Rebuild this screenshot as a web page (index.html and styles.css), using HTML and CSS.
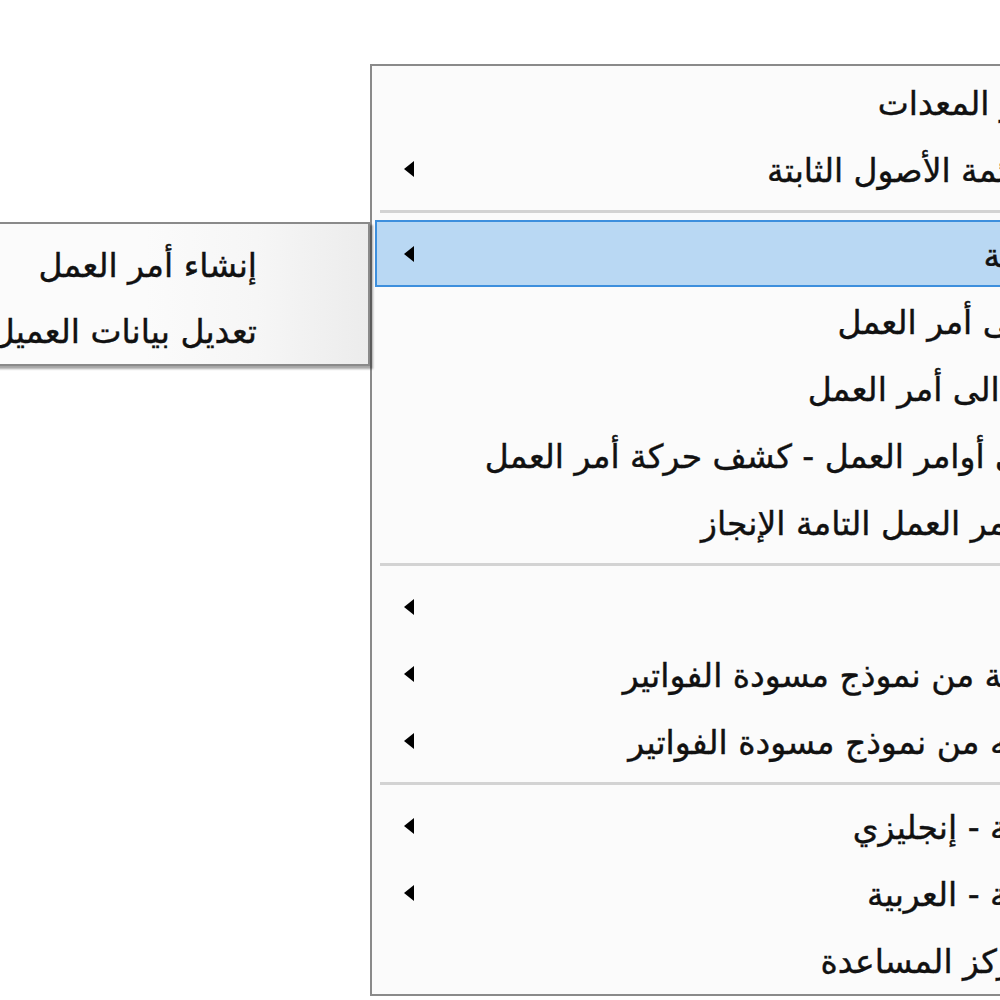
FILE: index.html
```html
<!DOCTYPE html>
<html lang="ar" dir="rtl">
<head>
    <meta charset="UTF-8">
    <title>قائمة أوامر العمل</title>
    <link rel="stylesheet" href="styles.css">
</head>
<body>
    <div class="desk">
        <div class="menu menu-main">
            <div class="item"><span class="icon"></span><span class="label">لكل تقارير المعدات</span><span class="arrow"></span></div>
            <div class="item"><span class="icon"></span><span class="label">وطباعة قائمة الأصول الثابتة</span><span class="arrow"><i class="tri"></i></span></div>
            <div class="sep"></div>
            <div class="item active"><span class="icon"></span><span class="label">لمن الصيانة</span><span class="arrow"><i class="tri"></i></span></div>
            <div class="item"><span class="icon"></span><span class="label">تكاليف على أمر العمل</span><span class="arrow"></span></div>
            <div class="item"><span class="icon"></span><span class="label">تحويل كل الى أمر العمل</span><span class="arrow"></span></div>
            <div class="item"><span class="icon"></span><span class="label">تقارير على أوامر العمل - كشف حركة أمر العمل</span><span class="arrow"></span></div>
            <div class="item"><span class="icon"></span><span class="label">تكاليف أوامر العمل التامة الإنجاز</span><span class="arrow"></span></div>
            <div class="sep"></div>
            <div class="item"><span class="icon"></span><span class="label">طباعة</span><span class="arrow"><i class="tri"></i></span></div>
            <div class="item"><span class="icon"></span><span class="label">سند ضريبية من نموذج مسودة الفواتير</span><span class="arrow"><i class="tri"></i></span></div>
            <div class="item"><span class="icon"></span><span class="label">كل مبسطه من نموذج مسودة الفواتير</span><span class="arrow"><i class="tri"></i></span></div>
            <div class="sep"></div>
            <div class="item"><span class="icon"></span><span class="label">لغة الواجهة - إنجليزي</span><span class="arrow"><i class="tri"></i></span></div>
            <div class="item"><span class="icon"></span><span class="label">لغة الواجهة - العربية</span><span class="arrow"><i class="tri"></i></span></div>
            <div class="item"><span class="icon"></span><span class="label">وصفحة مركز المساعدة</span><span class="arrow"></span></div>
        </div>

        <!-- قائمة فرعية لأوامر العمل -->
        <div class="menu menu-sub">
            <div class="item"><span class="icon"></span><span class="label">إنشاء أمر العمل</span><span class="arrow"></span></div>
            <div class="item"><span class="icon"></span><span class="label">تعديل بيانات العميل</span><span class="arrow"></span></div>
        </div>
    </div>
</body>
</html>
```

FILE: styles.css
```css
:root {
    --menu-bg: #fbfbfb;
    --menu-border: #8a8a8a;
    --text-color: #111111;
    --sep-color: #d3d3d3;
    --hover-bg: #b9d8f3;
    --hover-border: #3d8fdd;
}
body {
    margin: 0;
    background: #ffffff;
    font-family: 'DejaVu Sans', sans-serif;
    overflow: hidden;
}
.desk {
    position: relative;
    width: 1000px;
    height: 1000px;
    overflow: hidden;
}
.menu {
    position: absolute;
    background-color: var(--menu-bg);
    border: 2px solid var(--menu-border);
    box-sizing: border-box;
    direction: rtl;
}
.menu-main {
    left: 370px;
    top: 64px;
    width: 886px;
    padding: 2px 3px 1px;
}
.menu-sub {
    left: -80px;
    top: 222px;
    width: 450px;
    padding: 6px 3px 2px;
    background: linear-gradient(to left, #ececec 0%, #f6f6f6 25%, #fbfbfb 50%);
    box-shadow: 3px 3px 2px rgba(0, 0, 0, 0.35);
    z-index: 2;
}
.item {
    display: flex;
    align-items: center;
    height: 67px;
    box-sizing: border-box;
    font-size: 33px;
    color: var(--text-color);
    border: 2px solid transparent;
    -webkit-text-stroke: 0.4px var(--text-color);
}
.menu-sub .item {
    height: 66px;
}
.item.active {
    background-color: var(--hover-bg);
    border-color: var(--hover-border);
}
.icon {
    width: 106px;
    flex: none;
}
.label {
    flex: 1;
    white-space: nowrap;
    text-align: right;
    padding-top: 4px;
}
.arrow {
    width: 64px;
    flex: none;
    display: flex;
    justify-content: center;
}
.tri {
    width: 0;
    height: 0;
    border-top: 8px solid transparent;
    border-bottom: 8px solid transparent;
    border-right: 10px solid #000;
}
.sep {
    height: 18px;
    display: flex;
    align-items: center;
    padding-left: 5px;
}
.sep::after {
    content: '';
    flex: 1;
    height: 3px;
    background-color: var(--sep-color);
}
```
